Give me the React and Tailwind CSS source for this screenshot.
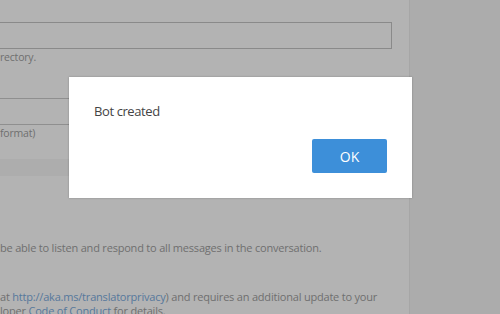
export default function App() {
  return (
    <div className="relative flex h-[314px] w-[500px] overflow-hidden bg-[#b3b3b3] font-['Open_Sans',sans-serif] text-[#6f6f6f]">
      {/* main form column (behind overlay) */}
      <div className="w-[410px] shrink-0 border-r border-[#a6a6a6]">
        <div className="mt-[22px] ml-[-20px] h-[27px] w-[412px] border border-[#8a8a8a]" />
        <p className="mt-[1px] text-[10.5px] leading-[14px] tracking-[-0.2px]">rectory.</p>

        <div className="mt-[34px] ml-[-20px] h-[27px] w-[300px] border-y border-[#8f8f8f]" />
        <p className="mt-[1px] text-[10.5px] leading-[14px] tracking-[-0.2px]">format)</p>

        <div className="mt-[19px] h-[17px] bg-[#adadad]" />

        <p className="mt-[64px] whitespace-nowrap text-[11px] leading-[16px] tracking-[-0.2px]">
          be able to listen and respond to all messages in the conversation.
        </p>

        <p className="mt-[33px] whitespace-nowrap text-[11px] leading-[15px] tracking-[-0.2px]">
          at <span className="text-[#56789c]">http://aka.ms/translatorprivacy</span>) and requires an additional update to your
        </p>
        <p className="whitespace-nowrap text-[11px] leading-[14px] tracking-[-0.2px]">
          loper <span className="text-[#56789c]">Code of Conduct</span> for details.
        </p>
      </div>

      {/* right rail */}
      <div className="flex-1 bg-[#acacac]" />

      {/* alert dialog */}
      <div className="absolute left-[69px] top-[77px] flex h-[121px] w-[343px] flex-col bg-white px-[25px] pt-[25px] pb-[25px] shadow-[0_0_2px_rgba(0,0,0,0.25)]">
        <p className="text-[13px] leading-[18px] tracking-[-0.4px] text-[#444]">Bot created</p>
        <div className="mt-auto flex justify-end">
          <button className="h-[34px] w-[75px] rounded-[2px] bg-[#3d8fd9] text-[14px] text-white">
            OK
          </button>
        </div>
      </div>
    </div>
  );
}
